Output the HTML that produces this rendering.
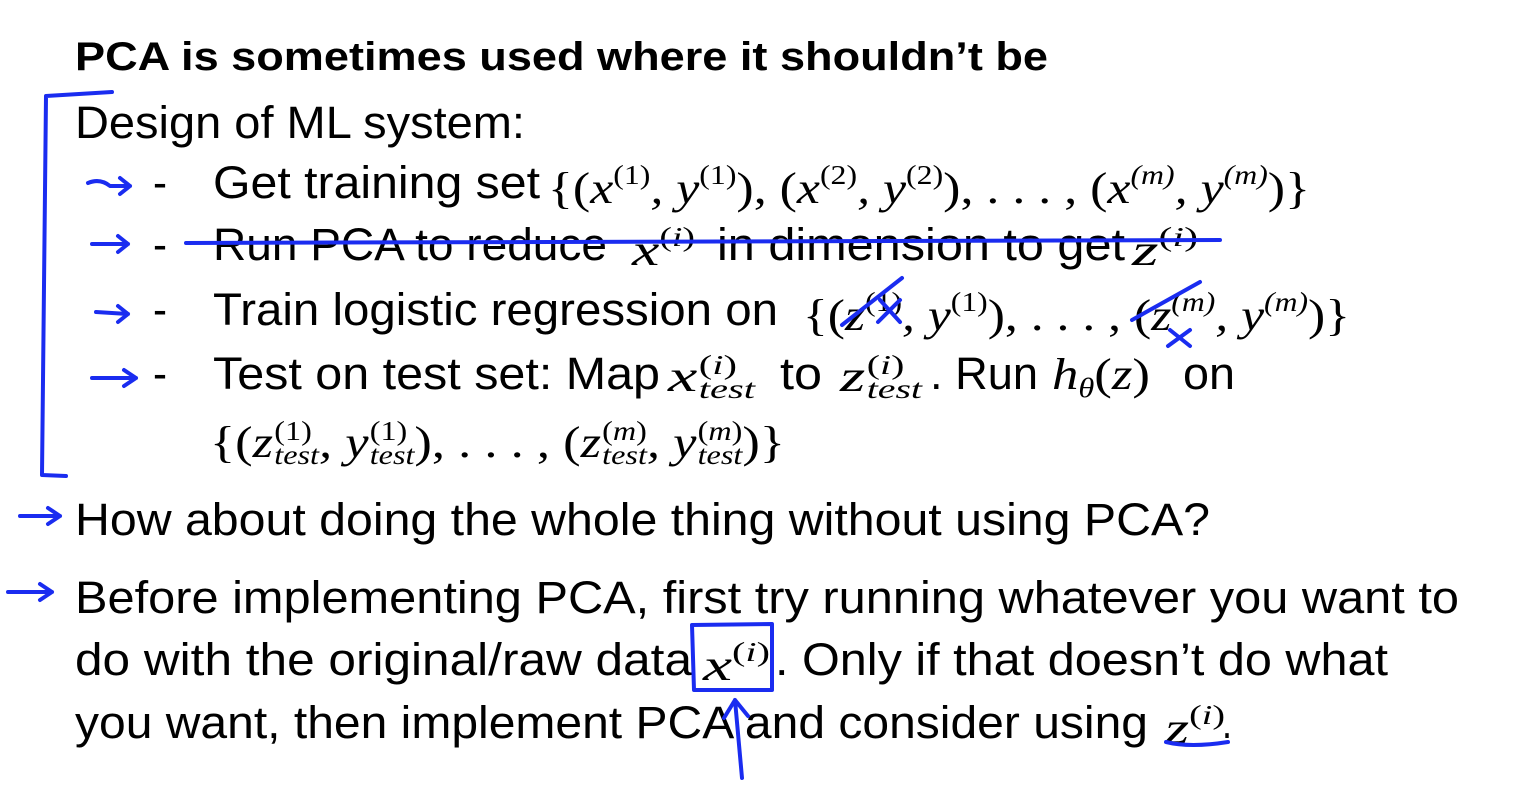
<!DOCTYPE html>
<html><head><meta charset="utf-8"><style>
body{margin:0;width:1530px;height:804px;background:#fff;overflow:hidden;position:relative;font-family:"Liberation Sans",sans-serif;color:#000}
.f{position:absolute;white-space:nowrap;font-size:45px;line-height:1;height:45px}
.f>span{display:inline-block;transform-origin:0 0}
.m{font-family:"Liberation Serif",serif;font-style:italic;font-size:44px}
.r{font-style:normal}
sup{font-size:27px;vertical-align:19px;font-family:"Liberation Serif",serif}
.ss{display:inline-flex;flex-direction:column;vertical-align:17px;font-size:27px;line-height:0.9;margin-left:1px}
.ss i,.ss b{font-weight:normal}
.ss b{font-style:normal}
</style></head><body>
<div class="f" style="left:75px;top:37px;width:973px;font-weight:bold;font-size:40px"><span>PCA is sometimes used where it shouldn’t be</span></div>
<div class="f" style="left:75px;top:100px;width:450px"><span>Design of ML system:</span></div>

<div class="f" style="left:153px;top:160px;width:14px"><span>-</span></div>
<div class="f" style="left:213px;top:160px;width:327px"><span>Get training set</span></div>
<div class="f m" style="left:548px;top:162px;width:762px"><span><span class="r">{(</span>x<sup class="r">(1)</sup>, y<sup class="r">(1)</sup><span class="r">), (</span>x<sup class="r">(2)</sup>, y<sup class="r">(2)</sup><span class="r">), . . . , (</span>x<sup>(m)</sup>, y<sup>(m)</sup><span class="r">)}</span></span></div>

<div class="f" style="left:153px;top:222px;width:14px"><span>-</span></div>
<div class="f" style="left:213px;top:222px;width:394px"><span>Run PCA to reduce</span></div>
<div class="f m" style="left:632px;top:224px;width:63px"><span>x<sup class="r">(<i>i</i>)</sup></span></div>
<div class="f" style="left:717px;top:222px;width:408px"><span>in dimension to get</span></div>
<div class="f m" style="left:1132px;top:224px;width:66px"><span>z<sup class="r">(<i>i</i>)</sup></span></div>

<div class="f" style="left:153px;top:287px;width:14px"><span>-</span></div>
<div class="f" style="left:213px;top:287px;width:565px"><span>Train logistic regression on</span></div>
<div class="f m" style="left:803px;top:289px;width:547px"><span><span class="r">{(</span>z<sup class="r">(1)</sup>, y<sup class="r">(1)</sup><span class="r">), . . . , (</span>z<sup>(m)</sup>, y<sup>(m)</sup><span class="r">)}</span></span></div>

<div class="f" style="left:153px;top:351px;width:14px"><span>-</span></div>
<div class="f" style="left:213px;top:351px;width:447px"><span>Test on test set: Map</span></div>
<div class="f m" style="left:668px;top:353px;width:87px;height:70px"><span>x<span class="ss"><b>(<i>i</i>)</b><i>test</i></span></span></div>
<div class="f" style="left:780px;top:351px;width:42px"><span>to</span></div>
<div class="f m" style="left:840px;top:353px;width:82px;height:70px"><span>z<span class="ss"><b>(<i>i</i>)</b><i>test</i></span></span></div>
<div class="f" style="left:930px;top:351px;width:108px"><span>. Run</span></div>
<div class="f m" style="left:1052px;top:353px;width:98px"><span>h<span style="font-size:27px;vertical-align:-8px">θ</span><span class="r">(</span>z<span class="r">)</span></span></div>
<div class="f" style="left:1183px;top:351px;width:52px"><span>on</span></div>

<div class="f m" style="left:210px;top:419px;width:575px;height:70px"><span><span class="r">{(</span>z<span class="ss"><b>(1)</b><i>test</i></span>, y<span class="ss"><b>(1)</b><i>test</i></span><span class="r">), . . . , (</span>z<span class="ss"><b>(<i>m</i>)</b><i>test</i></span>, y<span class="ss"><b>(<i>m</i>)</b><i>test</i></span><span class="r">)}</span></span></div>

<div class="f" style="left:75px;top:497px;width:1135px"><span>How about doing the whole thing without using PCA?</span></div>
<div class="f" style="left:75px;top:575px;width:1384px"><span>Before implementing PCA, first try running whatever you want to</span></div>
<div class="f" style="left:75px;top:637px;width:617px"><span>do with the original/raw data</span></div>
<div class="f m" style="left:703px;top:639px;width:67px"><span>x<sup class="r">(<i>i</i>)</sup></span></div>
<div class="f" style="left:775px;top:637px;width:613px"><span>. Only if that doesn’t do what</span></div>
<div class="f" style="left:75px;top:700px;width:1073px"><span>you want, then implement PCA and consider using</span></div>
<div class="f m" style="left:1165px;top:702px;width:60px"><span>z<sup class="r">(<i>i</i>)</sup></span></div>
<div class="f" style="left:1222px;top:700px;width:10px"><span>.</span></div>

<svg width="1530" height="804" style="position:absolute;left:0;top:0" fill="none" stroke="#1a2cf0" stroke-width="4" stroke-linecap="round" stroke-linejoin="round">
<path d="M112 92 L46 96 L42 475 L66 476"/>
<path d="M88 183 Q100 178 110 186 L130 186 M120 178 L130 186 L120 194"/>
<path d="M92 244 L128 244 M118 236 L128 244 L118 252"/>
<path d="M96 312 L128 314 M118 306 L128 314 L118 322"/>
<path d="M92 378 L136 378 M124 370 L136 378 L124 386"/>
<path d="M20 516 L60 516 M48 508 L60 516 L48 524"/>
<path d="M8 592 L52 592 M40 584 L52 592 L40 600"/>
<path d="M186 243 L1220 240"/>
<path d="M842 325 L902 278 M1132 320 L1200 282"/>
<path d="M880 300 L900 322 M900 300 L878 322 M1170 330 L1190 346 M1190 330 L1168 346"/>
<path d="M692 625 L772 624 L772 690 L694 690 Z"/>
<path d="M742 778 L735 700 M724 718 L735 700 L748 716"/>
<path d="M1166 742 Q1190 748 1228 742"/>
</svg>
<script>
document.querySelectorAll('.f').forEach(function(d){var s=d.firstElementChild;var w=parseFloat(d.style.width);var a=s.getBoundingClientRect().width;if(a>0)s.style.transform='scaleX('+(w/a)+')';});
</script>
</body></html>
